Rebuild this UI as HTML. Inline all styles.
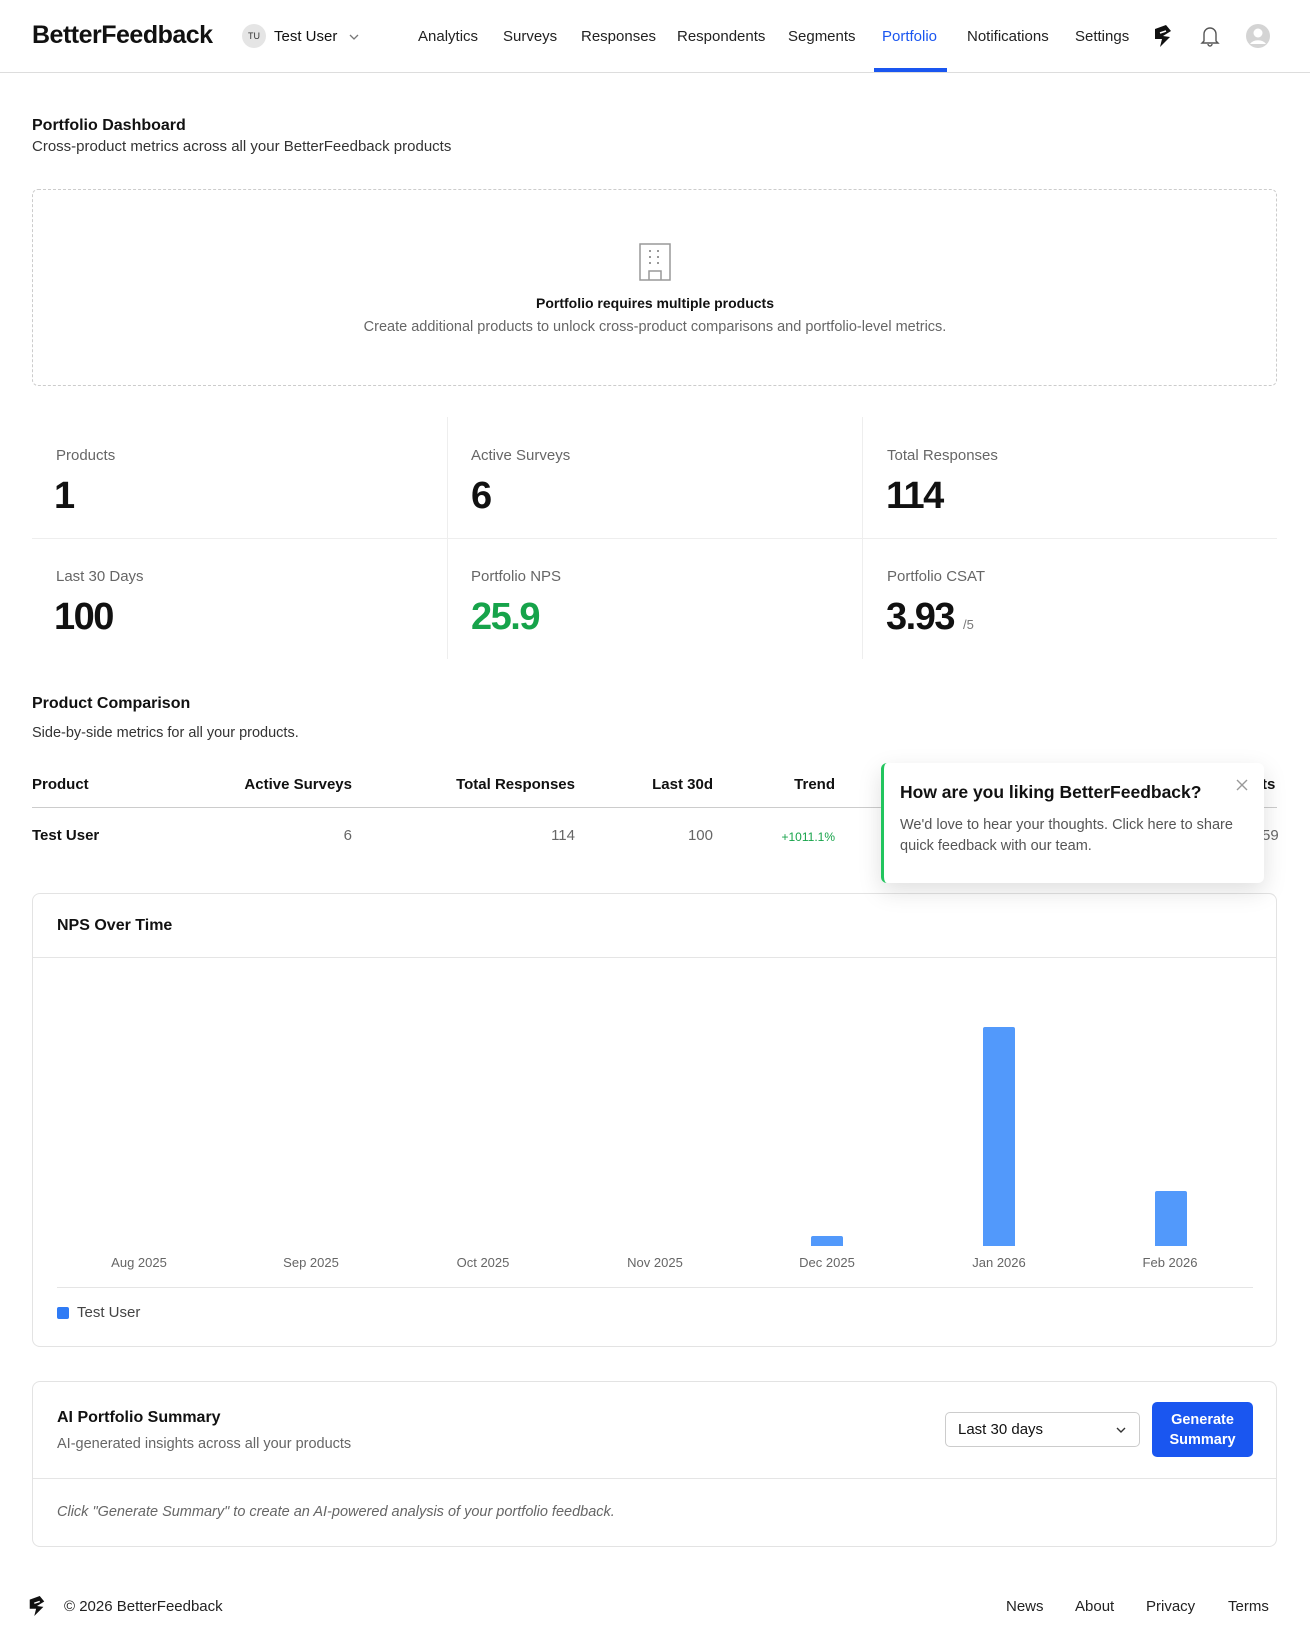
<!DOCTYPE html>
<html><head><meta charset="utf-8"><style>
*{box-sizing:border-box;margin:0;padding:0}
body{width:1310px;height:1636px;background:#fff;font-family:"Liberation Sans",sans-serif;color:#111;position:relative;overflow:hidden;font-size:15px}
.a{position:absolute;white-space:nowrap}
.nav{font-size:15px;color:#222;top:28px}
.gray{color:#555}
.lbl{font-size:15px;color:#666}
.val{font-size:38px;font-weight:bold;letter-spacing:-1.5px;color:#111}
.th{font-weight:bold;font-size:15px;top:776px}
.td{font-size:15px;color:#666;top:827px}
.xl{font-size:13px;color:#666;top:1255px;transform:translateX(-50%)}
.bar{position:absolute;background:#5299fb;border-radius:2px 2px 0 0}
</style></head><body>
<!-- header -->
<div class="a" style="left:32px;top:21px;font-size:25px;font-weight:bold;letter-spacing:-0.5px">BetterFeedback</div>
<div class="a" style="left:242px;top:24px;width:24px;height:24px;border-radius:50%;background:#e5e5e5;font-size:9px;text-align:center;line-height:24px;color:#333">TU</div>
<div class="a" style="left:274px;top:28px;font-size:15px">Test User</div>
<svg class="a" style="left:349px;top:33px" width="10" height="8"><path d="M1 2l4 4 4-4" stroke="#777" fill="none" stroke-width="1.3"/></svg>
<div class="a nav" style="left:418px">Analytics</div>
<div class="a nav" style="left:503px">Surveys</div>
<div class="a nav" style="left:581px">Responses</div>
<div class="a nav" style="left:677px">Respondents</div>
<div class="a nav" style="left:788px">Segments</div>
<div class="a nav" style="left:882px;color:#1a56f0">Portfolio</div>
<div class="a" style="left:874px;top:68px;width:73px;height:4px;background:#1a56f0"></div>
<div class="a nav" style="left:967px">Notifications</div>
<div class="a nav" style="left:1075px">Settings</div>
<svg class="a" style="left:1152px;top:24px" width="22" height="24" viewBox="0 0 22 24"><path d="M3 5 L14 1 L19 7 L11 12 L18 13 L8 23 L10 15 L3 15 Z" fill="#111"/><path d="M8 9l6-2" stroke="#fff" stroke-width="1.5"/></svg>
<svg class="a" style="left:1199px;top:24px" width="22" height="24" viewBox="0 0 22 24"><path d="M5 17V10a6 6 0 0 1 12 0v7l2 2H3z M9 20a2 2 0 0 0 4 0" stroke="#555" fill="none" stroke-width="1.4"/></svg>
<svg class="a" style="left:1246px;top:24px" width="24" height="24" viewBox="0 0 24 24"><circle cx="12" cy="12" r="12" fill="#d4d4d4"/><circle cx="12" cy="9" r="4.5" fill="#fff"/><path d="M4 20a9 7 0 0 1 16 0" fill="#fff"/></svg>
<div class="a" style="left:0;top:72px;width:1310px;height:1px;background:#ddd"></div>

<div class="a" style="left:32px;top:108px;font-size:16px;font-weight:bold;top:117px">Portfolio Dashboard</div>
<div class="a gray" style="left:32px;top:138px;font-size:15px;color:#333">Cross-product metrics across all your BetterFeedback products</div>

<div class="a" style="left:32px;top:189px;width:1245px;height:197px;border:1px dashed #ccc;border-radius:6px"></div>
<svg class="a" style="left:639px;top:243px" width="32" height="38" viewBox="0 0 32 38"><rect x="1" y="1" width="30" height="36" fill="none" stroke="#999" stroke-width="1.5"/><g fill="#999"><rect x="10" y="7" width="2" height="2"/><rect x="18" y="7" width="2" height="2"/><rect x="10" y="13" width="2" height="2"/><rect x="18" y="13" width="2" height="2"/><rect x="10" y="19" width="2" height="2"/><rect x="18" y="19" width="2" height="2"/></g><path d="M10 37V28h12v9" fill="none" stroke="#999" stroke-width="1.5"/></svg>
<div class="a" style="left:0;width:1310px;text-align:center;top:295px;font-weight:bold;font-size:14px">Portfolio requires multiple products</div>
<div class="a" style="left:0;width:1310px;text-align:center;top:319px;font-size:14.5px;color:#666">Create additional products to unlock cross-product comparisons and portfolio-level metrics.</div>

<!-- stats -->
<div class="a" style="left:447px;top:417px;width:1px;height:242px;background:#eee"></div>
<div class="a" style="left:862px;top:417px;width:1px;height:242px;background:#eee"></div>
<div class="a" style="left:32px;top:538px;width:1245px;height:1px;background:#eee"></div>
<div class="a lbl" style="left:56px;top:447px">Products</div>
<div class="a val" style="left:54px;top:475px">1</div>
<div class="a lbl" style="left:471px;top:447px">Active Surveys</div>
<div class="a val" style="left:471px;top:475px">6</div>
<div class="a lbl" style="left:887px;top:447px">Total Responses</div>
<div class="a val" style="left:886px;top:475px">114</div>
<div class="a lbl" style="left:56px;top:568px">Last 30 Days</div>
<div class="a val" style="left:54px;top:596px">100</div>
<div class="a lbl" style="left:471px;top:568px">Portfolio NPS</div>
<div class="a val" style="left:471px;top:596px;color:#16a34a">25.9</div>
<div class="a lbl" style="left:887px;top:568px">Portfolio CSAT</div>
<div class="a val" style="left:886px;top:596px">3.93 <span style="font-size:13px;font-weight:normal;color:#777;letter-spacing:0">/5</span></div>

<!-- comparison -->
<div class="a" style="left:32px;top:695px;font-size:16px;font-weight:bold">Product Comparison</div>
<div class="a" style="left:32px;top:725px;font-size:14.5px;color:#333">Side-by-side metrics for all your products.</div>
<div class="a th" style="left:32px">Product</div>
<div class="a th" style="right:958px">Active Surveys</div>
<div class="a th" style="right:735px">Total Responses</div>
<div class="a th" style="right:597px">Last 30d</div>
<div class="a th" style="right:475px">Trend</div>
<div class="a th" style="left:1262px">ts</div>
<div class="a" style="left:32px;top:807px;width:1245px;height:1px;background:#ccc"></div>
<div class="a" style="left:32px;top:827px;font-size:15px;font-weight:bold">Test User</div>
<div class="a td" style="right:958px">6</div>
<div class="a td" style="right:735px">114</div>
<div class="a td" style="right:597px">100</div>
<div class="a td" style="right:475px;color:#16a34a;font-size:12px;top:830px">+1011.1%</div>
<div class="a td" style="left:1262px">59</div>

<!-- NPS card -->
<div class="a" style="left:32px;top:893px;width:1245px;height:454px;border:1px solid #e3e3e3;border-radius:8px"></div>
<div class="a" style="left:33px;top:957px;width:1243px;height:1px;background:#e5e5e5"></div>
<div class="a" style="left:57px;top:917px;font-size:16px;font-weight:bold">NPS Over Time</div>
<div class="bar" style="left:811px;top:1236px;width:32px;height:10px"></div>
<div class="bar" style="left:983px;top:1027px;width:32px;height:219px"></div>
<div class="bar" style="left:1155px;top:1191px;width:32px;height:55px"></div>
<div class="a xl" style="left:139px">Aug 2025</div>
<div class="a xl" style="left:311px">Sep 2025</div>
<div class="a xl" style="left:483px">Oct 2025</div>
<div class="a xl" style="left:655px">Nov 2025</div>
<div class="a xl" style="left:827px">Dec 2025</div>
<div class="a xl" style="left:999px">Jan 2026</div>
<div class="a xl" style="left:1170px">Feb 2026</div>
<div class="a" style="left:57px;top:1287px;width:1196px;height:1px;background:#e5e5e5"></div>
<div class="a" style="left:57px;top:1307px;width:12px;height:12px;background:#2f7bf5;border-radius:2px"></div>
<div class="a" style="left:77px;top:1304px;font-size:15px;color:#444">Test User</div>

<!-- AI card -->
<div class="a" style="left:32px;top:1381px;width:1245px;height:166px;border:1px solid #e3e3e3;border-radius:8px"></div>
<div class="a" style="left:33px;top:1478px;width:1243px;height:1px;background:#e5e5e5"></div>
<div class="a" style="left:57px;top:1409px;font-size:16px;font-weight:bold">AI Portfolio Summary</div>
<div class="a" style="left:57px;top:1436px;font-size:14.5px;color:#666">AI-generated insights across all your products</div>
<div class="a" style="left:945px;top:1412px;width:195px;height:35px;border:1px solid #ccc;border-radius:5px;padding:8px 12px;font-size:15px">Last 30 days</div>
<svg class="a" style="left:1116px;top:1426px" width="10" height="8"><path d="M1 2l4 4 4-4" stroke="#333" fill="none" stroke-width="1.4"/></svg>
<div class="a" style="left:1152px;top:1402px;width:101px;height:55px;background:#1a56f0;border-radius:5px;color:#fff;font-weight:bold;font-size:14.5px;text-align:center;padding-top:8px;line-height:20px">Generate<br>Summary</div>
<div class="a" style="left:57px;top:1504px;font-size:14.5px;font-style:italic;color:#666">Click "Generate Summary" to create an AI-powered analysis of your portfolio feedback.</div>

<!-- footer -->
<svg class="a" style="left:27px;top:1594px" width="20" height="24" viewBox="0 0 22 24"><path d="M3 5 L14 1 L19 7 L11 12 L18 13 L8 23 L10 15 L3 15 Z" fill="#111"/><path d="M8 9l6-2" stroke="#fff" stroke-width="1.5"/></svg>
<div class="a" style="left:64px;top:1598px;font-size:15px;color:#222">© 2026 BetterFeedback</div>
<div class="a" style="left:1006px;top:1598px;font-size:15px;color:#222">News</div>
<div class="a" style="left:1075px;top:1598px;font-size:15px;color:#222">About</div>
<div class="a" style="left:1146px;top:1598px;font-size:15px;color:#222">Privacy</div>
<div class="a" style="left:1228px;top:1598px;font-size:15px;color:#222">Terms</div>

<!-- popup -->
<div class="a" style="left:881px;top:763px;width:383px;height:120px;background:#fff;border-left:3px solid #22c55e;border-radius:6px;box-shadow:0 8px 24px rgba(0,0,0,0.13)"></div>
<div class="a" style="left:900px;top:782px;font-size:17.5px;font-weight:bold;color:#111">How are you liking BetterFeedback?</div>
<svg class="a" style="left:1235px;top:778px" width="14" height="14"><path d="M2 2l10 10M12 2L2 12" stroke="#999" stroke-width="1.4"/></svg>
<div class="a" style="left:900px;top:815px;font-size:14.5px;color:#555;line-height:21px;white-space:normal;width:355px">We'd love to hear your thoughts. Click here to share quick feedback with our team.</div>
</body></html>
